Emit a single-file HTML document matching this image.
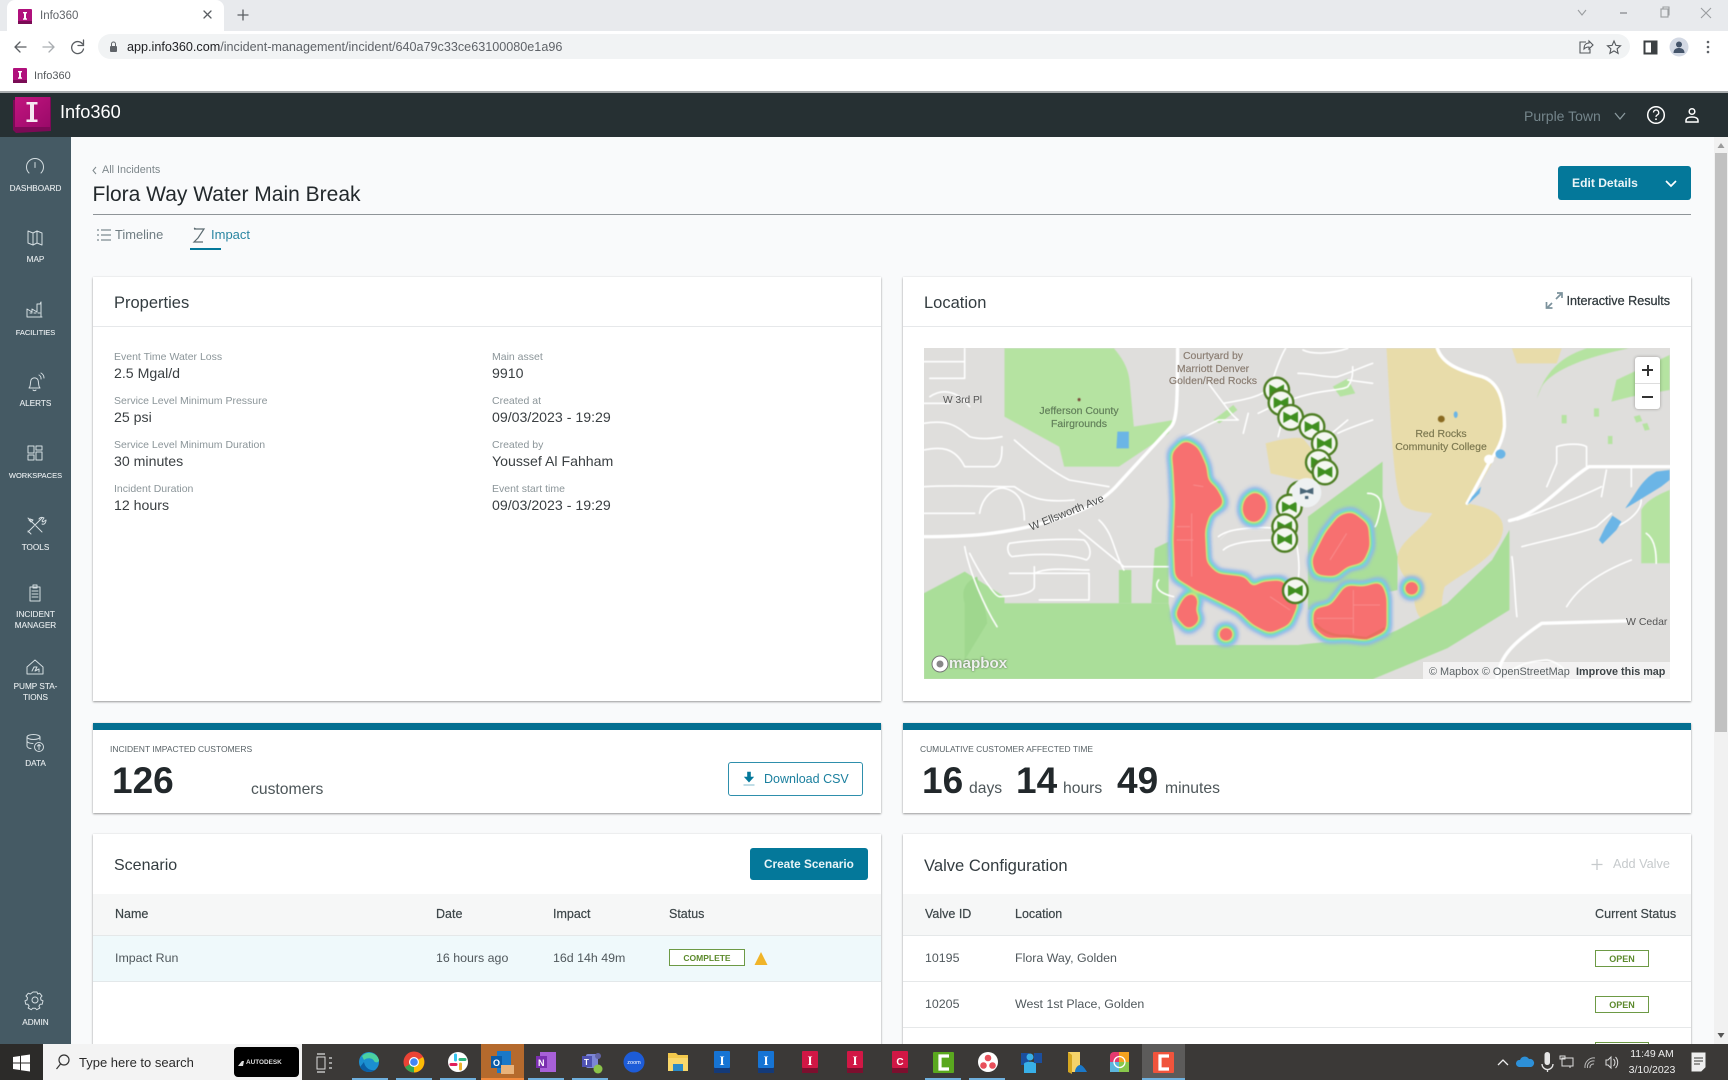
<!DOCTYPE html>
<html lang="en"><head><meta charset="utf-8"><title>Info360</title>
<style>
html,body{margin:0;padding:0;width:1728px;height:1080px;overflow:hidden;background:#fff}
#p{position:absolute;left:0;top:0;width:1728px;height:1080px;overflow:hidden;background:#f9fafb;font-family:"Liberation Sans",sans-serif;filter:blur(.35px)}
.b{position:absolute}
.t{position:absolute;white-space:nowrap;line-height:0}
.c{transform:translateX(-50%);text-align:center}
.card{position:absolute;background:#fff;box-shadow:0 1px 2px rgba(0,0,0,.38),0 0 2px rgba(0,0,0,.06)}
.nav{font-size:8.2px;color:#e8edef;-webkit-text-stroke:.1px #e8edef}
.lab{font-size:10.5px;color:#8b9599}
.val{font-size:14.15px;color:#3a3f42}
.th{font-size:12.5px;color:#3d4649;-webkit-text-stroke:.2px #3d4649}
.td{font-size:12.4px;color:#50585c}
.badge{position:absolute;border:1px solid #6d9a45;box-sizing:border-box;height:17px;background:#fff;color:#5c8a2c;font-size:8.5px;font-weight:bold;text-align:center;line-height:16px}
.big{font-size:37px;font-weight:bold;color:#22282b}
.unit{font-size:15.7px;color:#4d5659}
.h{font-size:16.5px;color:#333c40}
.ml{font-size:10.5px;-webkit-text-stroke:.2px}
svg{position:absolute;left:0;top:0;overflow:visible}
.r *{vector-effect:non-scaling-stroke}
</style></head><body><div id="p">

<!-- chrome -->
<div class="b" style="left:0;top:0;width:1728px;height:31px;background:#e8eaed"></div>
<div class="b" style="left:7px;top:0;width:217px;height:31px;background:#fff;border-radius:8px 8px 0 0"></div>
<div class="b" style="left:0;top:31px;width:1728px;height:61px;background:#fff"></div>
<div class="b" style="left:98px;top:34px;width:1532px;height:25px;background:#f1f3f4;border-radius:13px"></div>
<div class="b" style="left:0;top:91px;width:1728px;height:2px;background:#a9adaf"></div>
<div class="t" style="left:40px;top:16px;font-size:11.5px;color:#5f6368">Info360</div>
<div class="t" style="left:127px;top:47px;font-size:12.62px;color:#5f6368"><span style="color:#202124">app.info360.com</span>/incident-management/incident/640a79c33ce63100080e1a96</div>
<div class="t" style="left:34px;top:76px;font-size:11px;color:#55595c">Info360</div>

<!-- app shell -->
<div class="b" style="left:0;top:93px;width:1728px;height:44px;background:#263033"></div>
<div class="b" style="left:0;top:137px;width:71px;height:907px;background:#455a64"></div>
<div class="b" style="left:1714px;top:137px;width:14px;height:907px;background:#f1f1f1"></div>
<div class="b" style="left:1715px;top:153px;width:12px;height:579px;background:#c1c1c1"></div>
<div class="t" style="left:60px;top:112px;font-size:18.2px;color:#fff">Info360</div>
<div class="t" style="left:1524px;top:116px;font-size:14px;color:#74858b">Purple Town</div>

<!-- nav labels -->
<div class="t c nav" style="left:35.5px;top:189px">DASHBOARD</div>
<div class="t c nav" style="left:35.5px;top:260px">MAP</div>
<div class="t c nav" style="left:35.5px;top:333px;font-size:7.5px">FACILITIES</div>
<div class="t c nav" style="left:35.5px;top:404px">ALERTS</div>
<div class="t c nav" style="left:35.5px;top:476px;font-size:7.5px">WORKSPACES</div>
<div class="t c nav" style="left:35.5px;top:548px">TOOLS</div>
<div class="t c nav" style="left:35.5px;top:615px">INCIDENT</div>
<div class="t c nav" style="left:35.5px;top:625.5px">MANAGER</div>
<div class="t c nav" style="left:35.5px;top:687px">PUMP STA-</div>
<div class="t c nav" style="left:35.5px;top:697.500px">TIONS</div>
<div class="t c nav" style="left:35.5px;top:764px">DATA</div>
<div class="t c nav" style="left:35.5px;top:1023px">ADMIN</div>

<!-- page head -->
<div class="t" style="left:102px;top:170px;font-size:10.8px;color:#7d878b">All Incidents</div>
<div class="t" style="left:92.5px;top:195px;font-size:21px;color:#23292c">Flora Way Water Main Break</div>
<div class="b" style="left:93px;top:214px;width:1598px;height:1px;background:#8f9498"></div>
<div class="b" style="left:1558px;top:166px;width:133px;height:34px;background:#04789a;border-radius:3px"></div>
<div class="t" style="left:1572px;top:183px;font-size:12.1px;font-weight:bold;color:#eaf5f8">Edit Details</div>
<div class="t" style="left:115px;top:235px;font-size:12.9px;color:#6f7c82">Timeline</div>
<div class="t" style="left:211px;top:235px;font-size:13px;color:#2a86a2">Impact</div>
<div class="b" style="left:190px;top:248px;width:31px;height:2px;background:#04789a"></div>

<!-- properties -->
<div class="card" style="left:93px;top:277px;width:788px;height:424px"></div>
<div class="b" style="left:93px;top:326px;width:788px;height:1px;background:#e6e8ea"></div>
<div class="t h" style="left:114px;top:302.5px">Properties</div>
<div class="t lab" style="left:114px;top:356.5px">Event Time Water Loss</div>
<div class="t val" style="left:114px;top:373px">2.5 Mgal/d</div>
<div class="t lab" style="left:114px;top:400.5px">Service Level Minimum Pressure</div>
<div class="t val" style="left:114px;top:417px">25 psi</div>
<div class="t lab" style="left:114px;top:444.5px">Service Level Minimum Duration</div>
<div class="t val" style="left:114px;top:461px">30 minutes</div>
<div class="t lab" style="left:114px;top:488.5px">Incident Duration</div>
<div class="t val" style="left:114px;top:505px">12 hours</div>
<div class="t lab" style="left:492px;top:356.5px">Main asset</div>
<div class="t val" style="left:492px;top:373px">9910</div>
<div class="t lab" style="left:492px;top:400.5px">Created at</div>
<div class="t val" style="left:492px;top:417px">09/03/2023 - 19:29</div>
<div class="t lab" style="left:492px;top:444.5px">Created by</div>
<div class="t val" style="left:492px;top:461px">Youssef Al Fahham</div>
<div class="t lab" style="left:492px;top:488.5px">Event start time</div>
<div class="t val" style="left:492px;top:505px">09/03/2023 - 19:29</div>

<!-- location -->
<div class="card" style="left:903px;top:277px;width:788px;height:424px"></div>
<div class="b" style="left:903px;top:326px;width:788px;height:1px;background:#e6e8ea"></div>
<div class="t h" style="left:924px;top:302.5px">Location</div>
<div class="t" style="left:1566.5px;top:300.5px;font-size:12.6px;color:#30393d;-webkit-text-stroke:.25px #30393d">Interactive Results</div>

<!-- stat cards -->
<div class="card" style="left:93px;top:723px;width:788px;height:90px"></div>
<div class="b" style="left:93px;top:723px;width:788px;height:7px;background:#046f91"></div>
<div class="t" style="left:110px;top:749px;font-size:8.5px;color:#586266">INCIDENT IMPACTED CUSTOMERS</div>
<div class="t big" style="left:112px;top:781px">126</div>
<div class="t unit" style="left:251px;top:790px">customers</div>
<div class="b" style="left:728px;top:762px;width:135px;height:34px;box-sizing:border-box;border:1px solid #2e8fac;border-radius:3px;background:#fff"></div>
<div class="t" style="left:764px;top:779px;font-size:12.5px;color:#1a7f9e">Download CSV</div>

<div class="card" style="left:903px;top:723px;width:788px;height:90px"></div>
<div class="b" style="left:903px;top:723px;width:788px;height:7px;background:#046f91"></div>
<div class="t" style="left:920px;top:749px;font-size:8.45px;color:#586266">CUMULATIVE CUSTOMER AFFECTED TIME</div>
<div class="t big" style="left:922px;top:781px">16</div>
<div class="t unit" style="left:969px;top:789px">days</div>
<div class="t big" style="left:1016px;top:781px">14</div>
<div class="t unit" style="left:1063px;top:789px">hours</div>
<div class="t big" style="left:1117px;top:781px">49</div>
<div class="t unit" style="left:1165px;top:789px">minutes</div>

<!-- scenario -->
<div class="card" style="left:93px;top:834px;width:788px;height:240px"></div>
<div class="t h" style="left:114px;top:865.5px;font-size:16px">Scenario</div>
<div class="b" style="left:750px;top:848px;width:118px;height:32px;background:#04789a;border-radius:3px"></div>
<div class="t" style="left:764px;top:864px;font-size:11.8px;font-weight:bold;color:#e8f4f7">Create Scenario</div>
<div class="b" style="left:93px;top:894px;width:788px;height:41px;background:#f6f7f7;border-bottom:1px solid #e5e8e9"></div>
<div class="t th" style="left:115px;top:914px">Name</div>
<div class="t th" style="left:436px;top:914px">Date</div>
<div class="t th" style="left:553px;top:914px">Impact</div>
<div class="t th" style="left:669px;top:914px">Status</div>
<div class="b" style="left:93px;top:936px;width:788px;height:45px;background:#eff9fb;border-bottom:1px solid #e3e8ea"></div>
<div class="t td" style="left:115px;top:958px">Impact Run</div>
<div class="t td" style="left:436px;top:958px">16 hours ago</div>
<div class="t td" style="left:553px;top:958px">16d 14h 49m</div>
<div class="badge" style="left:669px;top:949px;width:76px">COMPLETE</div>

<!-- valves -->
<div class="card" style="left:903px;top:834px;width:788px;height:240px"></div>
<div class="t h" style="left:924px;top:865.5px;font-size:16.6px">Valve Configuration</div>
<div class="t" style="left:1613px;top:864px;font-size:12.7px;color:#c6cacc">Add Valve</div>
<div class="b" style="left:903px;top:894px;width:788px;height:41px;background:#f6f7f7;border-bottom:1px solid #e5e8e9"></div>
<div class="t th" style="left:925px;top:914px">Valve ID</div>
<div class="t th" style="left:1015px;top:914px">Location</div>
<div class="t th" style="left:1595px;top:914px;font-size:12.6px">Current Status</div>
<div class="b" style="left:903px;top:981px;width:788px;height:1px;background:#e6e8e9"></div>
<div class="b" style="left:903px;top:1027px;width:788px;height:1px;background:#e6e8e9"></div>
<div class="t td" style="left:925px;top:958px">10195</div>
<div class="t td" style="left:1015px;top:958px">Flora Way, Golden</div>
<div class="t td" style="left:925px;top:1004px">10205</div>
<div class="t td" style="left:1015px;top:1004px">West 1st Place, Golden</div>
<div class="badge" style="left:1595px;top:950px;width:54px;font-size:9px">OPEN</div>
<div class="badge" style="left:1595px;top:996px;width:54px;font-size:9px">OPEN</div>
<div class="badge" style="left:1595px;top:1042px;width:54px;font-size:9px"></div>

<!-- map -->
<div class="b" style="left:924px;top:348px;width:746px;height:331px;overflow:hidden;background:#dfdedc">
<svg width="746" height="331" viewBox="924 348 746 331" style="filter:blur(.6px)">
 <defs>
  <filter id="heat" filterUnits="userSpaceOnUse" x="-120" y="-20" width="1200" height="1000" color-interpolation-filters="sRGB">
   <feGaussianBlur stdDeviation="12"/>
   <feColorMatrix type="matrix" values="0 0 0 1 0  0 0 0 1 0  0 0 0 1 0  0 0 0 1 0"/>
   <feComponentTransfer>
    <feFuncR type="table" tableValues=".55 .55 .52 .47 .47 .52 .65 .80 .92 .97 .97 .97 .97 .97 .97 .97 .97 .97 .97 .97 .97"/>
    <feFuncG type="table" tableValues=".70 .70 .76 .82 .86 .88 .90 .90 .86 .46 .44 .44 .44 .44 .44 .44 .44 .44 .44 .44 .44"/>
    <feFuncB type="table" tableValues=".92 .92 .90 .87 .76 .62 .55 .50 .45 .44 .44 .44 .44 .44 .44 .44 .44 .44 .44 .44 .44"/>
    <feFuncA type="table" tableValues="0 .65 .9 1 1 1 1 1 1 1 1 1 1 1 1 1 1 1 1 1 1"/>
   </feComponentTransfer>
  </filter>
 </defs>
 <g transform="translate(900 340) scale(.4975 .3333)">
  <g fill="#b5e3a1">
   <path d="M210 25H430C450 60 460 90 462 130L470 260L550 240L540 280L440 380H330L320 320L210 230Z"/>
   <path d="M1290 140C1310 90 1380 50 1465 25H1380C1340 45 1300 80 1280 175Z"/>
   <path d="M1440 120L1547 45V150L1470 170L1430 185Z"/>
   <path d="M1490 510C1500 480 1530 460 1547 450V670H1490Z"/>
   <path d="M1330 225h10v25h-10zM1395 205h10v25h-10zM1475 230l12 -5l5 18l-12 5zM1492 252l10 -3l5 20l-10 3zM1423 288h9v24h-9zM870 140l30 -25l15 45l-30 10zM630 240l40 -45l8 15l-36 40z"/>
  </g>
  <path d="M978 25H1078C1085 70 1130 95 1170 105C1210 125 1222 190 1215 260C1205 350 1170 420 1140 490C1180 500 1215 520 1212 570C1205 650 1140 690 1095 740C1085 780 1095 830 1075 845C1050 855 1035 830 1032 760C1025 720 1000 700 1000 650C1005 600 1050 570 1070 520C1040 515 1010 510 1005 480C990 400 985 200 978 25Z" fill="#e8dcaa"/>
  <path d="M1230 25H1330L1320 70H1240Z" fill="#e8dcaa"/>
  <path d="M735 310C760 300 790 290 810 295C830 330 850 370 850 400L820 425L745 400Z" fill="#e8dcaa"/>
  <path d="M210 790H540L555 915H800C880 900 960 900 1000 870L1100 790L1190 660L1225 570V810L1100 925L950 1018H48V760L130 695L210 770Z" fill="#aade99"/>
  <path d="M820 530L970 365V470L1000 650V750L820 810Z" fill="#aade99"/>
  <path d="M440 690H465V790H440ZM512 625L540 605V790H505Z" fill="#aade99"/>
  <path d="M130 790C120 740 140 720 155 710C165 780 175 820 175 850L130 960Z" fill="#9fd78e"/>
  <g class="r" fill="none" stroke="#fff" stroke-width="1.600" stroke-linejoin="round" stroke-linecap="round">
   <path d="M48 65H130M130 25V115H60M48 250C90 240 110 250 140 290C160 300 190 295 205 290M48 330C80 320 110 320 130 380H190C205 370 205 340 205 320M48 440C110 435 170 440 230 440C260 470 280 490 350 480M230 300C260 340 300 390 340 420L420 440M160 520C165 470 190 440 210 445C240 455 250 490 250 540M48 520H150M220 610C260 600 330 595 370 600C385 620 385 650 375 660C340 640 270 640 225 650C215 640 215 620 220 610ZM140 640C160 700 190 770 200 770C230 770 270 760 270 740V680M360 570L450 680H540M220 700H380V780H280M130 620C140 700 170 800 195 860M270 700C300 680 340 690 380 690M400 540C430 580 430 640 450 690M60 170C90 140 120 160 140 200M48 190H100"/>
   <path d="M650 190C690 180 730 170 745 140C755 90 765 50 775 25M650 190L620 130M650 190C660 210 670 230 680 240H640M640 240C610 260 590 280 560 300M720 220C760 190 800 170 830 160C860 150 890 150 900 140C910 120 910 100 910 80M800 100C830 100 860 115 880 110C910 95 930 80 950 70M880 280C900 265 930 250 950 240M650 630C670 600 740 600 780 600M640 590C660 565 720 555 790 570C800 620 805 680 800 720M900 120L950 130M940 460C960 460 970 480 965 510C962 530 960 550 955 560M810 30C830 45 870 40 900 25M700 220L690 280M770 230L760 290M860 290L900 240M520 720C510 740 520 760 550 770"/>
   <path d="M1240 540C1300 510 1370 470 1410 440M1320 320C1340 310 1370 310 1380 320V380M1320 320V370L1300 440M1420 390L1410 470M1470 380V440M1250 620C1300 600 1370 580 1400 560L1430 520M1240 830C1235 760 1235 700 1230 650M1340 800C1360 750 1400 700 1470 660M1220 1018C1225 980 1260 965 1300 960C1320 965 1335 985 1340 1000M1440 560C1470 540 1490 510 1490 480M1500 580C1520 600 1520 650 1520 670"/>
  </g>
  <g class="r" fill="none" stroke="#fff" stroke-width="3.400" stroke-linejoin="round" stroke-linecap="round">
   <path d="M48 590C150 590 200 580 260 560C340 530 400 500 440 430L545 260C556 240 558 200 558 25"/>
   <path d="M1080 25C1090 70 1120 90 1170 110C1210 130 1215 200 1215 260C1210 320 1190 350 1180 380L1140 490"/>
   <path d="M1225 542C1290 520 1330 430 1385 380H1547"/>
   <path d="M1200 1018C1205 960 1220 920 1290 850L1460 843"/>
  </g>
  <g fill="#6bb5e6">
   <path d="M437 275H460V325H435Z"/>
   <ellipse cx="1207" cy="342" rx="10" ry="14"/>
   <path d="M1460 500C1480 460 1490 420 1520 395L1547 390V420L1530 440L1475 490L1458 505Z"/>
   <path d="M1432 527L1450 545L1440 570L1412 612L1405 600L1418 560Z"/>
   <path d="M1150 470L1168 440L1165 460L1140 495Z"/>
   <ellipse cx="1117" cy="224" rx="4" ry="10"/>
  </g>
  <ellipse cx="1184" cy="358" rx="10" ry="14" fill="#fff"/>
  <ellipse cx="360" cy="179" rx="3" ry="5" fill="#7a4a3a"/>
  <ellipse cx="1088" cy="237" rx="7" ry="10" fill="#8a6a20"/>
 </g>
 <g transform="translate(1150 370) scale(.33333)">
  <defs>
   <g id="v"><circle r="37" fill="#f4f7f0" stroke="#4c7d22" stroke-width="7"/><path d="M-22 -17L0 -5L22 -17V17L0 5L-22 17Z" fill="#3f8f1f"/></g>
  </defs>
  <g filter="url(#heat)" fill="#000" stroke="#000" stroke-width="4" stroke-linejoin="round">
   <path d="M105 215L140 235L165 290L170 335L195 355L218 400L175 430L160 480L165 580L200 615L285 625L305 660L335 640L395 635L440 700L415 760L360 785L310 760L270 720L190 680L130 650L80 620L75 510L80 400L75 300L70 250Z"/>
   <path d="M315 368L342 388L345 420L322 454L293 449L280 420L288 388Z"/>
   <path d="M605 430L650 465L655 530L635 575L590 585L555 615L500 610L490 570L530 490L570 440Z"/>
   <path d="M495 720L545 710L590 650L640 655L690 640L705 680V780L650 805L590 798L530 800L495 770Z"/>
   <path d="M122 672L142 690L130 720L146 750L115 775L80 735L102 690Z"/>
   <circle cx="785" cy="655" r="20" stroke="none"/>
   <circle cx="228" cy="793" r="20" stroke="none"/>
  </g>
  <path d="M130 510H80M130 345L160 350M125 430V620M120 470H80M210 510L240 480H340M590 490L540 570M610 660V790M500 745L610 745M610 705H690M360 680L420 720" fill="none" stroke="#fff" stroke-width="3" opacity=".2"/>
  <path d="M495 760C520 790 560 800 590 798L650 805L705 775" fill="none" stroke="#c86a3a" stroke-width="8" opacity=".3"/>
  <use href="#v" x="380" y="60"/><use href="#v" x="393" y="98"/><use href="#v" x="422" y="142"/><use href="#v" x="486" y="170"/><use href="#v" x="523" y="220"/><use href="#v" x="505" y="277"/><use href="#v" x="525" y="306"/><use href="#v" x="450" y="372"/><use href="#v" x="418" y="411"/><use href="#v" x="404" y="470"/><use href="#v" x="404" y="508"/>
  <circle cx="470" cy="368" r="44" fill="#eef1f2"/>
  <path d="M450 353L470 361L490 353V373L470 367L450 373ZM465 378h10v9h-10z" fill="#4a6678"/>
  <use href="#v" x="436" y="662"/>
 </g>
</svg>
<div class="t c ml" style="left:289px;top:8px;color:#8c7f74">Courtyard by</div>
<div class="t c ml" style="left:289px;top:20.5px;color:#8c7f74">Marriott Denver</div>
<div class="t c ml" style="left:289px;top:33px;color:#8c7f74">Golden/Red Rocks</div>
<div class="t" style="left:19px;top:53px;font-size:10.2px;color:#555">W 3rd Pl</div>
<div class="t c ml" style="left:155px;top:62.5px;color:#63815b">Jefferson County</div>
<div class="t c ml" style="left:155px;top:75.5px;color:#63815b">Fairgrounds</div>
<div class="t c ml" style="left:517px;top:86px;color:#7e7a52">Red Rocks</div>
<div class="t c ml" style="left:517px;top:99px;color:#7e7a52">Community College</div>
<div class="t" style="left:106px;top:180px;font-size:11px;color:#4d4f4f;transform:rotate(-22deg);transform-origin:0 0">W Ellsworth Ave</div>
<div class="t" style="left:702px;top:274px;font-size:10.5px;color:#555">W Cedar</div>
<div class="b" style="left:499px;top:314px;width:247px;height:17px;background:rgba(255,255,255,.62)"></div>
<div class="t" style="left:505px;top:324px;font-size:10.9px;color:#5b6265">© Mapbox © OpenStreetMap</div>
<div class="t" style="left:652px;top:324px;font-size:10.8px;font-weight:bold;color:#3e4548">Improve this map</div>
<div class="t" style="left:25px;top:316px;font-size:15.2px;font-weight:bold;color:#eef0ee;text-shadow:0 0 2px rgba(0,0,0,.55)">mapbox</div>
<svg width="746" height="331"><circle cx="16" cy="316" r="8" fill="#fff" stroke="#777" stroke-width="1"/><circle cx="16" cy="316" r="3.5" fill="#888"/></svg>
<div class="b" style="left:711px;top:9px;width:25px;height:52px;background:#fff;border-radius:3px;box-shadow:0 0 3px rgba(0,0,0,.3)"></div>
<div class="b" style="left:711px;top:35px;width:25px;height:1px;background:#ddd"></div>
<div class="b" style="left:718px;top:21px;width:11px;height:2px;background:#333"></div>
<div class="b" style="left:722.5px;top:16.5px;width:2px;height:11px;background:#333"></div>
<div class="b" style="left:718px;top:48px;width:11px;height:2px;background:#333"></div>
</div>

<!-- taskbar -->
<div class="b" style="left:0;top:1044px;width:1728px;height:36px;background:#3b3937"></div>
<div class="b" style="left:0;top:1044px;width:43px;height:36px;background:#2c2b29"></div>
<div class="b" style="left:43px;top:1044px;width:259px;height:36px;background:#f3f3f3"></div>
<div class="b" style="left:234px;top:1047px;width:65px;height:30px;background:#000;border-radius:4px"></div>
<div class="t" style="left:246px;top:1063px;font-size:6.4px;font-weight:bold;color:#ddd">AUTODESK</div>
<div class="b" style="left:481px;top:1044px;width:43px;height:36px;background:#b56a2d"></div>
<div class="b" style="left:1142px;top:1044px;width:43px;height:36px;background:#5c5b5a"></div>
<div class="t" style="left:79px;top:1063px;font-size:13px;color:#2a2a2a">Type here to search</div>
<div class="t c" style="left:1652px;top:1054px;font-size:10.5px;color:#eee">11:49 AM</div>
<div class="t c" style="left:1652px;top:1070px;font-size:10.5px;color:#eee">3/10/2023</div>
<div class="b" style="left:352px;top:1078px;width:36px;height:2px;background:#6fb0dd"></div>
<div class="b" style="left:396px;top:1078px;width:36px;height:2px;background:#6fb0dd"></div>
<div class="b" style="left:440px;top:1078px;width:36px;height:2px;background:#6fb0dd"></div>
<div class="b" style="left:481px;top:1078px;width:43px;height:2px;background:#f2893c"></div>
<div class="b" style="left:528px;top:1078px;width:36px;height:2px;background:#6fb0dd"></div>
<div class="b" style="left:572px;top:1078px;width:36px;height:2px;background:#6fb0dd"></div>
<div class="b" style="left:925px;top:1078px;width:36px;height:2px;background:#6fb0dd"></div>
<div class="b" style="left:969px;top:1078px;width:36px;height:2px;background:#6fb0dd"></div>
<div class="b" style="left:1142px;top:1078px;width:43px;height:2px;background:#6fb0dd"></div>

<!-- all remaining icons -->
<svg width="1728" height="1080" viewBox="0 0 1728 1080">
 <defs>
  <g id="fav"><rect x="0" y="0" width="14" height="15" rx="1" fill="#b0107c"/><rect x="0" y="12" width="14" height="3" fill="#7a0c55"/><path d="M5 3h4v1.400H8v5h1v1.400H5V9.400h1v-5H5z" fill="#fff"/></g>
  <linearGradient id="lg" x1="0" y1="0" x2="1" y2="1"><stop offset="0" stop-color="#c2147f"/><stop offset="1" stop-color="#9a0a69"/></linearGradient>
 </defs>
 <!-- favicons -->
 <use href="#fav" x="18" y="9"/><use href="#fav" x="13" y="68"/>
 <!-- tab chrome -->
 <g fill="none" stroke="#5a5e62" stroke-width="1.300" stroke-linecap="round">
  <path d="M204 11l7 7M211 11l-7 7"/>
  <path d="M243 10v10M238 15h10"/>
  <path d="M26 47H15M20 42l-5 5 5 5"/>
  <path d="M54 47H43M49 42l5 5-5 5" stroke="#a9adb1"/>
  <path d="M82.500 44a6 6 0 1 0 1 5M83.500 40v5.500h-5.500"/>
 </g>
 <rect x="110" y="46" width="7" height="6" rx="1" fill="#5f6368"/><path d="M111.500 46v-2a2 2 0 0 1 4 0v2" fill="none" stroke="#5f6368"/>
 <g fill="none" stroke="#9a9da0" stroke-width="1.100"><path d="M1578 10l4 5 4-5"/><path d="M1620 13h7" stroke-width="1.600"/><rect x="1661" y="9" width="7" height="8"/><path d="M1663 9v-2h6v8h-1"/><path d="M1701 8l10 10M1711 8l-10 10"/></g>
 <g fill="none" stroke="#55595d" stroke-width="1.100"><path d="M1586 42h-6v11h10v-4"/><path d="M1584 49c0-4 2-6 5-6v-2l4 4-4 4v-2c-2 0-4 1-5 2z"/><path d="M1614 41l1.900 4.400 4.600.4-3.400 3 1 4.600-4.100-2.500-4.100 2.500 1-4.600-3.400-3 4.600-.4z"/></g>
 <rect x="1644.500" y="41.500" width="12" height="12" fill="none" stroke="#3c4043" stroke-width="2"/><rect x="1651" y="41" width="6" height="13" fill="#3c4043"/>
 <circle cx="1679" cy="47" r="9.500" fill="#d3d9e4"/><circle cx="1679" cy="44.500" r="3" fill="#44546a"/><path d="M1673.500 53c0-4 3-5 5.500-5s5.500 1 5.500 5z" fill="#44546a"/>
 <g fill="#5f6368"><circle cx="1708" cy="42" r="1.300"/><circle cx="1708" cy="47" r="1.300"/><circle cx="1708" cy="52" r="1.300"/></g>
 <!-- logo -->
 <path d="M13 100L51 97V131L16 133L13 130Z" fill="#7c0a56"/>
 <path d="M15 97H50V127H15Z" fill="url(#lg)"/>
 <path d="M26.500 102h11v2.500H34v15h3.500v2.500h-11v-2.500H30v-15h-3.500z" fill="#f6e9f1"/>
 <!-- header right -->
 <path d="M1615 113l5 6 5-6" fill="none" stroke="#8a999e" stroke-width="1.300"/>
 <circle cx="1656" cy="115" r="8.300" fill="none" stroke="#fff" stroke-width="1.500"/>
 <path d="M1653.500 112.500a2.600 2.600 0 1 1 3.800 2.400c-.9.500-1.300 1-1.300 2" fill="none" stroke="#fff" stroke-width="1.300"/><circle cx="1656" cy="119.200" r=".9" fill="#fff"/>
 <circle cx="1692" cy="111.500" r="2.800" fill="none" stroke="#fff" stroke-width="1.500"/>
 <path d="M1686 122v-1.500c0-2.500 3-3.500 6-3.500s6 1 6 3.500v1.500z" fill="none" stroke="#fff" stroke-width="1.500"/>
 <!-- scrollbar arrows -->
 <path d="M1721 143l3.500 5h-7z" fill="#9a9a9a"/><path d="M1721 1038l3.500-5h-7z" fill="#555"/>
 <!-- sidebar icons -->
 <g fill="none" stroke="#d4dde1" stroke-width="1" stroke-linejoin="round" stroke-linecap="round">
  <path d="M29 173a8.500 8.500 0 1 1 12 0M35 162.500v5"/>
  <path d="M28 231l5 2 4-2 5 2v12l-5-2-4 2-5-2zM33 233v12M37 231v12"/>
  <path d="M27 317v-8l5 3v-3l5 3v-8h3l1 -2v15zM27 317h15M30 313h2M34 313h2M38 313h2"/>
  <path d="M29 388c2-2 1-5 2-8a4 4 0 0 1 7 0c1 3 0 6 2 8zM33 390a2 2 0 0 0 3 0M39 375a4 4 0 0 1 2 4M41 373a6 6 0 0 1 3 5"/>
  <path d="M28 446h6v7h-6zM36 446h6v4h-6zM36 452h6v8h-6zM28 455h6v5h-6z"/>
  <path d="M28 518l14 14M42 518l-14 14M28 531l3 3M39 519c1-2 4-2 5-1l-2 3 1 1 3-2c0 3-2 5-4 4M30 519l3 1-2 2-2-2z"/>
  <path d="M30 587h10v14H30zM33 585h4v3h-4zM32 591h6M32 594h6M32 597h6"/>
  <path d="M27 667l8-7 8 7v7H27zM32 671l2-4h3l-2 4 4-2 0 3"/>
  <ellipse cx="33.500" cy="737" rx="6.500" ry="2.500"/><path d="M27 737v9c0 1.500 2 2.500 4 2.500M40 737v3M27 741c0 1.500 3 2.500 6 2.500"/><circle cx="39" cy="747" r="4.500"/><path d="M39 749.500v-5M37.500 746l1.500-1.500 1.500 1.500"/>
  <circle cx="35" cy="1000" r="3"/>
  <path d="M33 992h4l.7 2 2-.8 2.300 2.800-1.500 1.700.5 2.300 2 .8-.8 3.500-2.100 0-1.200 1.900 1 1.800-3.200 1.700-1.400-1.500h-2.600l-1.400 1.500-3.200-1.700 1-1.800-1.200-1.900-2.100 0-.8-3.500 2-.8.500-2.300-1.500-1.700 2.300-2.800 2 .8z"/>
 </g>
 <!-- head icons -->
 <path d="M96 167l-3 3.500 3 3.500" fill="none" stroke="#7d878b" stroke-width="1"/>
 <path d="M1666 181l5 5 5-5" fill="none" stroke="#fff" stroke-width="1.700"/>
 <g stroke="#7d8a90" stroke-width="1.200"><path d="M101 230h10M101 235h10M101 240h10"/><path d="M97 230h2M97 235h2M97 240h2"/></g>
 <path d="M194 229h10l-6 9 -4 4h9M196 229l-2 -1" fill="none" stroke="#5b6a70" stroke-width="1.200"/>
 <!-- interactive -->
 <g fill="none" stroke="#7c929c" stroke-width="1.700"><path d="M1556 299l5-5M1557 293h5v5"/><path d="M1552 303l-5 5M1546.500 302v6h6"/></g>
 <!-- download -->
 <path d="M747.500 772h3v5h3l-4.500 5-4.500-5h3zM743.500 785h11" fill="#04789a" stroke="#04789a" stroke-width=".6"/>
 <!-- warning -->
 <path d="M761 952l6.500 13h-13z" fill="#f0b428"/>
 <!-- add -->
 <path d="M1597 859v11M1591.500 864.500h11" stroke="#c6cacc" stroke-width="1.300"/>
 <!-- taskbar: start + search -->
 <g fill="#fff"><path d="M13 1057l7-1v6.500h-7zM21 1055.800l9-1.300v8h-9zM13 1063.500h7v6.500l-7-1zM21 1063.500h9v8l-9-1.300z"/></g>
 <circle cx="64" cy="1060" r="5" fill="none" stroke="#333" stroke-width="1.200"/><path d="M60.500 1064l-4 5" stroke="#333" stroke-width="1.200"/>
 <path d="M238 1066l4-5h2l-1 5z" fill="#ddd"/>
 <!-- task view -->
 <g fill="none" stroke="#ddd" stroke-width="1"><rect x="317" y="1057" width="8" height="12"/><path d="M317 1054h8M317 1072h8M329 1058h3M329 1063h3M329 1068h3" stroke-width="1.200"/></g>
 <!-- edge -->
 <circle cx="369" cy="1062" r="10" fill="#1b8fd0"/><path d="M362 1056a10 10 0 0 1 17 4c0 3-4 3-5 1-1-3-7-4-10-1z" fill="#4bd0a0"/><path d="M364 1062c1 6 6 9 11 8-4 3-12 3-15-3z" fill="#0b5fa5"/>
 <!-- chrome -->
 <circle cx="414" cy="1062" r="10.500" fill="#ea4335"/><path d="M414 1062l-9 5a10.500 10.500 0 0 0 9 5.500z" fill="#34a853"/><path d="M414 1062l9-5a10.500 10.500 0 0 1-9 15.500z" fill="#fbbc05"/><circle cx="414" cy="1062" r="5" fill="#fff"/><circle cx="414" cy="1062" r="3.800" fill="#4285f4"/>
 <!-- slack -->
 <circle cx="458" cy="1062" r="10" fill="#fff"/><g stroke-width="3" stroke-linecap="round"><path d="M455.500 1055v5" stroke="#36c5f0"/><path d="M465 1059.500h-5" stroke="#2eb67d"/><path d="M460.500 1069v-5" stroke="#ecb22e"/><path d="M451 1064.500h5" stroke="#e01e5a"/></g>
 <!-- outlook -->
 <rect x="497" y="1051" width="14" height="22" fill="#1a78c8"/><rect x="491" y="1056" width="11" height="12" fill="#0a5ca8"/><text x="493" y="1066" font-size="9" font-weight="bold" fill="#fff" font-family="Liberation Sans">O</text><rect x="501" y="1065" width="13" height="9" fill="#e9b27a"/>
 <!-- onenote -->
 <rect x="540" y="1052" width="16" height="20" fill="#a860d8"/><rect x="536" y="1056" width="11" height="12" fill="#7b2fb0"/><text x="538" y="1066" font-size="9" font-weight="bold" fill="#fff" font-family="Liberation Sans">N</text>
 <!-- teams -->
 <rect x="586" y="1054" width="12" height="14" rx="2" fill="#7c86d6"/><circle cx="598" cy="1056" r="3" fill="#6264a7"/><rect x="582" y="1056" width="10" height="11" fill="#4f52b2"/><text x="584" y="1065" font-size="8" font-weight="bold" fill="#fff" font-family="Liberation Sans">T</text><circle cx="598" cy="1069" r="4.500" fill="#8bc34a"/>
 <!-- zoom -->
 <circle cx="634" cy="1062" r="10.500" fill="#1d5cd8"/><text x="634" y="1064" text-anchor="middle" font-size="5.500" fill="#fff" font-family="Liberation Sans">zoom</text>
 <!-- files -->
 <path d="M668 1053h8l2 2h10v16h-20z" fill="#f2c84c"/><rect x="668" y="1058" width="20" height="13" fill="#f8d76a"/><rect x="673" y="1064" width="10" height="7" fill="#2a8ac8"/>
 <!-- app tiles -->
 <g font-family="Liberation Serif" font-weight="bold" font-size="13" text-anchor="middle" fill="#fff">
  <rect x="714" y="1051" width="16" height="17" rx="1" fill="#1674d4"/><rect x="714" y="1068" width="16" height="5" fill="#143a78"/><text x="722" y="1065">I</text>
  <rect x="758" y="1051" width="16" height="17" rx="1" fill="#1674d4"/><rect x="758" y="1068" width="16" height="5" fill="#143a78"/><text x="766" y="1065">I</text>
  <rect x="802" y="1051" width="16" height="17" rx="1" fill="#d11745"/><rect x="802" y="1068" width="16" height="5" fill="#7c0f2e"/><text x="810" y="1065">I</text>
  <rect x="847" y="1051" width="16" height="17" rx="1" fill="#d11745"/><rect x="847" y="1068" width="16" height="5" fill="#7c0f2e"/><text x="855" y="1065">I</text>
  <rect x="892" y="1051" width="16" height="17" rx="1" fill="#d11745"/><rect x="892" y="1068" width="16" height="5" fill="#7c0f2e"/><text x="900" y="1065" font-family="Liberation Sans" font-size="10">C</text>
 </g>
 <!-- green C -->
 <rect x="933" y="1052" width="21" height="21" rx="1" fill="#5aa81f"/><path d="M949 1056h-9v13h9" fill="none" stroke="#fff" stroke-width="3.200"/>
 <!-- asana -->
 <circle cx="988" cy="1062" r="10" fill="#fff"/><g fill="#e8505b"><circle cx="988" cy="1058" r="3.300"/><circle cx="983.500" cy="1065.500" r="3.300"/><circle cx="992.500" cy="1065.500" r="3.300"/></g>
 <!-- people -->
 <rect x="1021" y="1053" width="8" height="12" fill="#1b4f9e"/><circle cx="1030" cy="1057" r="3.500" fill="#38b0e8"/><path d="M1024 1064c0-3 12-3 12 0v9h-12z" fill="#38b0e8"/><rect x="1034" y="1053" width="8" height="10" fill="#1b4f9e"/>
 <!-- drive folder -->
 <path d="M1068 1052h12v20h-12z" fill="#f5d36a"/><path d="M1068 1052l4 3v19l-4-2z" fill="#d6a720"/><path d="M1075 1072c0-4 3-7 5-7s4 2 7 7z" fill="#1a78c8"/>
 <!-- cc -->
 <rect x="1110" y="1052" width="19" height="20" rx="4" fill="#e43a6f"/><rect x="1119" y="1052" width="10" height="10" fill="#f3a21f"/><rect x="1110" y="1062" width="10" height="10" fill="#5cb6dd"/><rect x="1119" y="1062" width="10" height="10" fill="#88c84b"/><circle cx="1119.500" cy="1062" r="5.500" fill="none" stroke="#fff" stroke-width="1.300"/>
 <!-- camtasia -->
 <rect x="1153" y="1052" width="21" height="21" rx="1" fill="#f0543c"/><path d="M1169 1056h-9v13h9" fill="none" stroke="#fff" stroke-width="3.200"/>
 <!-- tray -->
 <path d="M1498 1065l5-5 5 5" fill="none" stroke="#eee" stroke-width="1.300"/>
 <path d="M1519 1067a3.500 3.500 0 0 1 1-7 5 5 0 0 1 9-1 4 4 0 0 1 2 8z" fill="#2d90d8"/>
 <rect x="1544.500" y="1052" width="5.500" height="13" rx="2.700" fill="#e6e6e6"/><path d="M1542 1064a5.500 5.500 0 0 0 11 0M1547.500 1069v3" fill="none" stroke="#e6e6e6" stroke-width="1.300"/>
 <g fill="none" stroke="#ddd" stroke-width="1"><rect x="1562" y="1058" width="11" height="8"/><path d="M1560 1056h5v3h-5zM1570 1066v2"/></g>
 <path d="M1585 1068a9 9 0 0 1 10-10M1587.500 1068a6 6 0 0 1 7-7M1590 1068a3.500 3.500 0 0 1 4-4" fill="none" stroke="#bbb" stroke-width="1"/>
 <path d="M1606 1060h2l3-3v11l-3-3h-2zM1613.500 1059a5 5 0 0 1 0 7M1615.500 1057a8 8 0 0 1 0 11" fill="none" stroke="#ddd" stroke-width="1"/>
 <path d="M1692 1053h13v14l-4 4h-9z" fill="#eee" stroke="#eee"/><path d="M1694 1058h9M1694 1061h9M1694 1064h6" stroke="#3b3937"/>
</svg>
</div></body></html>
